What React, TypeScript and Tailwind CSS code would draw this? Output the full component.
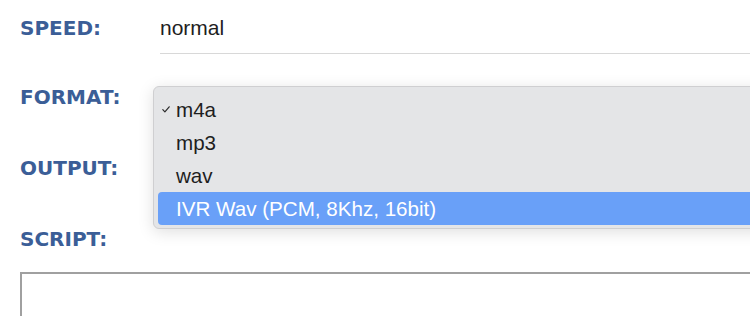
import React from 'react'

const formats = ['m4a', 'mp3', 'wav', 'IVR Wav (PCM, 8Khz, 16bit)']

function Label({ children }: { children: React.ReactNode }) {
  return (
    <div className="w-[140px] shrink-0 font-['DejaVu_Sans',sans-serif] text-[20px] font-bold leading-[24px] text-[#3b5e97]">
      {children}
    </div>
  )
}

function FormatMenu({ selected, active }: { selected: number; active: number }) {
  return (
    <div className="absolute left-[-7px] top-[1px] z-10 h-[143px] w-[620px] rounded-[6px] border border-[#cfcfd1] bg-[#e4e5e7] px-[4px] pt-[6px] shadow-[0_3px_16px_rgba(0,0,0,0.13)]">
      {formats.map((f, i) => (
        <div
          key={f}
          className={`flex h-[33px] items-center rounded-[4px] text-[20.6px] leading-[33px] ${
            i === active ? 'bg-[#69a0f8] text-white' : 'text-[#1e1e1e]'
          }`}
        >
          <span className="flex w-[18px] shrink-0 items-center pl-[4px]">
            {i === selected && (
              <svg width="8" height="7" viewBox="0 0 8 7" fill="none">
                <path d="M0.8 3.6 L2.9 5.9 L7.2 0.8" stroke="#2a2a2a" strokeWidth="1.2" strokeLinecap="round" strokeLinejoin="round" />
              </svg>
            )}
          </span>
          <span>{f}</span>
        </div>
      ))}
    </div>
  )
}

export default function App() {
  return (
    <div className="relative h-[316px] w-[750px] overflow-hidden bg-white pl-[20px] font-['Liberation_Sans',Arial,sans-serif]">
      {/* speed */}
      <div className="flex items-start pt-[16px]">
        <Label>SPEED:</Label>
        <div className="w-[620px] shrink-0 border-b border-[#d8d8d8] pb-[13px] text-[21px] leading-[24px] text-[#1e1e1e]">
          normal
        </div>
      </div>

      {/* format, with the open menu */}
      <div className="mt-[31px] flex h-[24px] items-start">
        <Label>FORMAT:</Label>
        <div className="relative h-[24px] w-[620px] shrink-0">
          <FormatMenu selected={0} active={3} />
        </div>
      </div>

      {/* output */}
      <div className="mt-[47px] flex h-[24px] items-start">
        <Label>OUTPUT:</Label>
        <div className="h-[24px] w-[620px] shrink-0" />
      </div>

      {/* script */}
      <div className="mt-[47px] flex h-[24px] items-start">
        <Label>SCRIPT:</Label>
      </div>
      <textarea className="mt-[21px] block h-[120px] w-[760px] resize-none border-2 border-[#a0a0a0] bg-white" />
    </div>
  )
}
